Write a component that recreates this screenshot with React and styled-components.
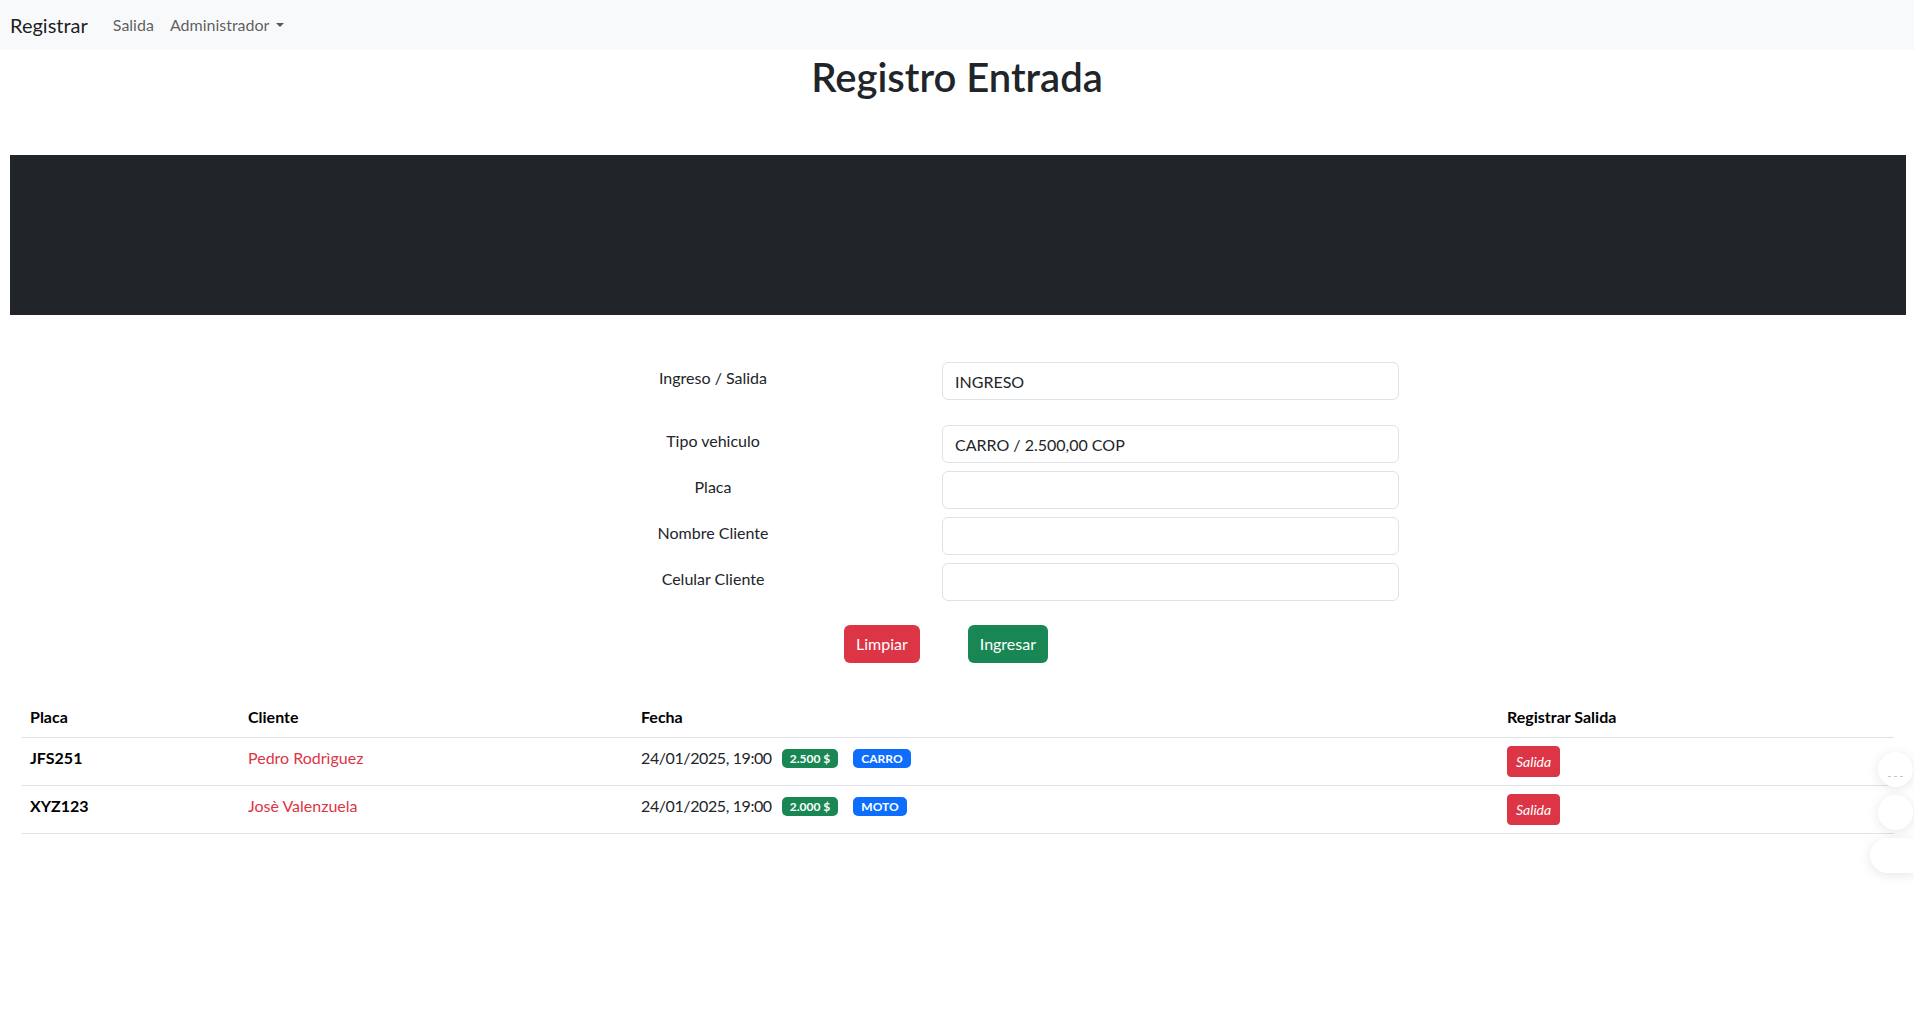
import styled, { createGlobalStyle } from "styled-components";

const GlobalStyle = createGlobalStyle`
    * { box-sizing: border-box; }
    body {
        margin: 0;
        font-family: Lato, "Noto Sans", sans-serif;
        font-size: 16px;
        line-height: 1.5;
        color: #212529;
        background: #fff;
    }
`;

/* Top navigation */
const Navbar = styled.nav`
    height: 50px;
    background-color: #f8f9fa;
    display: flex;
    align-items: center;
    padding: 0 10px;
`;

const Brand = styled.a`
    font-size: 20px;
    color: rgba(0, 0, 0, 0.9);
    margin-right: 17px;
    text-decoration: none;
`;

const NavLink = styled.a`
    padding: 0 8px;
    color: rgba(0, 0, 0, 0.65);
    text-decoration: none;
    display: flex;
    align-items: center;

    ${(p) => p.$dropdown && `
        &::after {
            content: "";
            margin-left: 7px;
            border-top: 4.5px solid rgba(0, 0, 0, 0.65);
            border-left: 4px solid transparent;
            border-right: 4px solid transparent;
        }
    `}
`;

const Title = styled.h1`
    margin: 3px 0 54px;
    font-size: 40px;
    font-weight: 600;
    line-height: 1.2;
    text-align: center;
`;

const Banner = styled.div`
    height: 160px;
    margin: 0 8px 0 10px;
    background-color: #212529;
`;

/* Form */
const Form = styled.form`
    display: grid;
    grid-template-columns: 458px 457px;
    justify-content: center;
    padding: 47px 31px 0 0;
    row-gap: 8px;
`;

const Label = styled.label`
    text-align: center;
    padding-top: 4px;
    line-height: 24px;
    ${(p) => p.$spaced && "margin-bottom: 17px;"}
`;

const Input = styled.input`
    height: 38px;
    padding: 6px 12px;
    font: inherit;
    color: #212529;
    border: 1px solid #dee2e6;
    border-radius: 6px;
    background: #fff;
    ${(p) => p.$spaced && "margin-bottom: 17px;"}
`;

const ButtonRow = styled.div`
    display: flex;
    justify-content: center;
    gap: 48px;
    padding: 24px 22px 0 0;
`;

const Button = styled.button`
    height: 38px;
    padding: 6px 12px;
    font: inherit;
    color: #fff;
    border: none;
    border-radius: 6px;
    background-color: ${(p) => (p.$variant === "success" ? "#198754" : "#dc3545")};
`;

/* Table */
const Table = styled.table`
    width: calc(100% - 42px);
    margin: 34px 20px 0 22px;
    border-collapse: collapse;
    vertical-align: top;

    th, td {
        padding: 8px;
        text-align: left;
        border-bottom: 1px solid #dee2e6;
        vertical-align: top;
    }

    th {
        font-weight: 700;
        color: #000;
    }
`;

const Plate = styled.td`
    font-weight: 700;
    color: #000;
`;

const Client = styled.td`
    color: #dc3545;
`;

const DateText = styled.span`
    letter-spacing: -0.4px;
`;

const Badge = styled.span`
    display: inline-block;
    margin-left: ${(p) => p.$gap}px;
    padding: 2px 8px;
    font-size: 12px;
    font-weight: 700;
    line-height: 15px;
    color: #fff;
    border-radius: 5px;
    background-color: ${(p) => (p.$color === "green" ? "#198754" : "#0d6efd")};
    vertical-align: 1px;
`;

const SmallButton = styled.button`
    padding: 4px 8px;
    font: inherit;
    font-size: 14px;
    font-style: italic;
    line-height: 21px;
    color: #fff;
    border: 1px solid #dc3545;
    border-radius: 4px;
    background-color: #dc3545;
`;

/* Floating widgets clipped at the right edge */
const FloatDock = styled.div`
    position: fixed;
    right: 0;
    top: 752px;
    display: flex;
    flex-direction: column;
    align-items: flex-end;
    gap: 8px;
`;

const FloatBubble = styled.div`
    width: ${(p) => (p.$pill ? 44 : 35)}px;
    height: 35px;
    margin-right: ${(p) => (p.$pill ? 0 : 1)}px;
    border-radius: ${(p) => (p.$pill ? "18px 0 0 18px" : "50%")};
    background: #fff;
    box-shadow: 0 2px 12px rgba(0, 0, 0, 0.1);
    display: flex;
    align-items: flex-end;
    justify-content: center;
    gap: 3px;
    padding-bottom: 10px;

    i {
        width: 3px;
        height: 1px;
        background: #c4c8cc;
    }
`;

const entries = [
    { plate: "JFS251", client: "Pedro Rodrìguez", date: "24/01/2025, 19:00", price: "2.500 $", type: "CARRO" },
    { plate: "XYZ123", client: "Josè Valenzuela", date: "24/01/2025, 19:00", price: "2.000 $", type: "MOTO" },
];

export default function App() {
    return (
        <>
            <GlobalStyle />
            <Navbar>
                <Brand href="#">Registrar</Brand>
                <NavLink href="#">Salida</NavLink>
                <NavLink href="#" $dropdown>Administrador</NavLink>
            </Navbar>

            <Title>Registro Entrada</Title>
            <Banner />

            <Form onSubmit={(e) => e.preventDefault()}>
                <Label $spaced>Ingreso / Salida</Label>
                <Input $spaced defaultValue="INGRESO" readOnly />
                <Label>Tipo vehiculo</Label>
                <Input defaultValue="CARRO / 2.500,00 COP" readOnly />
                <Label>Placa</Label>
                <Input />
                <Label>Nombre Cliente</Label>
                <Input />
                <Label>Celular Cliente</Label>
                <Input />
            </Form>

            <ButtonRow>
                <Button type="button">Limpiar</Button>
                <Button type="button" $variant="success">Ingresar</Button>
            </ButtonRow>

            <Table>
                <colgroup>
                    <col style={{ width: 218 }} />
                    <col style={{ width: 393 }} />
                    <col style={{ width: 866 }} />
                    <col />
                </colgroup>
                <thead>
                    <tr>
                        <th>Placa</th>
                        <th>Cliente</th>
                        <th>Fecha</th>
                        <th>Registrar Salida</th>
                    </tr>
                </thead>
                <tbody>
                    {entries.map((row) => (
                        <tr key={row.plate}>
                            <Plate>{row.plate}</Plate>
                            <Client>{row.client}</Client>
                            <td>
                                <DateText>{row.date}</DateText>
                                <Badge $color="green" $gap={10}>{row.price}</Badge>
                                <Badge $gap={15}>{row.type}</Badge>
                            </td>
                            <td>
                                <SmallButton type="button">Salida</SmallButton>
                            </td>
                        </tr>
                    ))}
                </tbody>
            </Table>

            <FloatDock>
                <FloatBubble><i /><i /><i /></FloatBubble>
                <FloatBubble />
                <FloatBubble $pill />
            </FloatDock>
        </>
    );
}
